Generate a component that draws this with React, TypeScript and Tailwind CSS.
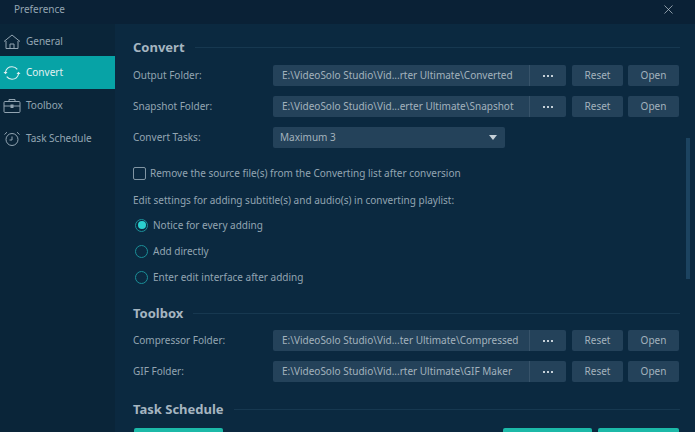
import { ReactNode } from "react";
import { X } from "lucide-react";

const font = { fontFamily: '"Noto Sans", sans-serif' };

function HomeIcon() {
  return (
    <svg width="18" height="16" viewBox="0 0 18 16" fill="none" stroke="currentColor" strokeWidth="1">
      <path d="M1 7.5 9 1l8 6.5" />
      <path d="M3 7v7.5h12V7" />
      <path d="M7 14.5V10h4v4.5" />
    </svg>
  );
}

function SyncIcon() {
  return (
    <svg width="18" height="16" viewBox="0 0 18 16" fill="none" stroke="currentColor" strokeWidth="1.1">
      <path d="M2.5 7C3.2 3.8 5.8 1.8 9 1.8c2.2 0 4 .9 5.3 2.6" />
      <path d="M15.5 9c-.7 3.2-3.3 5.2-6.5 5.2-2.2 0-4-.9-5.3-2.6" />
      <path d="M0.5 7h4L2.5 9.2z" fill="currentColor" stroke="none" />
      <path d="M13.5 9h4l-2-2.2z" fill="currentColor" stroke="none" />
    </svg>
  );
}

function ToolboxIcon() {
  return (
    <svg width="18" height="16" viewBox="0 0 18 16" fill="none" stroke="currentColor" strokeWidth="1">
      <rect x="1" y="3.5" width="16" height="11" rx="1" />
      <path d="M6 3.5V1.5h6v2" />
      <path d="M1 8h16" />
      <rect x="8" y="7" width="2" height="2.5" fill="currentColor" />
    </svg>
  );
}

function ClockIcon() {
  return (
    <svg width="18" height="16" viewBox="0 0 18 16" fill="none" stroke="currentColor" strokeWidth="1">
      <circle cx="9" cy="8.5" r="6" />
      <path d="M9 5.5v3.5H6.5" />
      <path d="M1.5 3.5 4 1.2M16.5 3.5 14 1.2" />
    </svg>
  );
}

function NavItem({ icon, label, active }: { icon: ReactNode; label: string; active?: boolean }) {
  return (
    <div
      className={
        active
          ? "flex h-[33px] items-center gap-[5px] bg-[#07a3a6] pl-[3px] text-[#e3f1f2]"
          : "flex h-[33px] items-center gap-[5px] pl-[3px] text-[#93a5b2]"
      }
    >
      {icon}
      <span className="text-[10px]">{label}</span>
    </div>
  );
}

function SectionTitle({ children }: { children: string }) {
  return (
    <div className="flex h-[20px] items-center gap-[10px] pr-[15px]">
      <span className="text-[13px] leading-none font-bold text-[#a5b5c0]">{children}</span>
      <div className="h-px flex-1 bg-[#173850]" />
    </div>
  );
}

function FolderRow({ label, path }: { label: string; path: string }) {
  return (
    <div className="flex h-[21px] items-center text-[10px] text-[#93a5b2]">
      <span className="w-[140px] shrink-0">{label}</span>
      <div className="flex h-full w-[293px] items-center rounded-[2px] bg-[#24425a]">
        <span className="flex-1 truncate pl-[9px] text-[#a3b2bd]">{path}</span>
        <span className="flex h-full w-[37px] shrink-0 items-center justify-center gap-[2px] border-l border-[#37536a]">
          <i className="size-[2px] bg-[#c5d0d8]" />
          <i className="size-[2px] bg-[#c5d0d8]" />
          <i className="size-[2px] bg-[#c5d0d8]" />
        </span>
      </div>
      <div className="ml-[6px] flex h-full w-[51px] items-center justify-center rounded-[2px] bg-[#24425a] text-[#a3b2bd]">Reset</div>
      <div className="ml-[5px] flex h-full w-[51px] items-center justify-center rounded-[2px] bg-[#24425a] text-[#a3b2bd]">Open</div>
    </div>
  );
}

function Radio({ label, checked }: { label: string; checked?: boolean }) {
  return (
    <div className="flex h-[26px] items-center pl-[2px] text-[10px] text-[#93a5b2]">
      <span className="flex size-[13px] items-center justify-center rounded-full border border-[#1b8f98]">
        {checked && <span className="size-[8px] rounded-full bg-[#2bd0cf]" />}
      </span>
      <span className="ml-[5px]">{label}</span>
    </div>
  );
}

export default function App() {
  return (
    <div className="relative flex h-[432px] w-[695px] flex-col overflow-hidden bg-[#0b2940]" style={font}>
      <header className="flex h-[24px] shrink-0 items-center justify-between bg-[#0a2136] pb-[6px] pl-[14px] pr-[19px]">
        <span className="text-[10px] text-[#93a5b2]">Preference</span>
        <X size={15} strokeWidth={1.2} className="text-[#b3c0ca]" />
      </header>
      <div className="flex min-h-0 flex-1">
        <nav className="w-[115px] shrink-0 bg-[#0a2539]">
          <div className="h-[32px] pt-px">
            <NavItem icon={<HomeIcon />} label="General" />
          </div>
          <NavItem icon={<SyncIcon />} label="Convert" active />
          <NavItem icon={<ToolboxIcon />} label="Toolbox" />
          <NavItem icon={<ClockIcon />} label="Task Schedule" />
        </nav>
        <main className="min-w-0 flex-1 pl-[18px] pt-[13px]">
          <SectionTitle>Convert</SectionTitle>
          <div className="mt-[8px] flex flex-col gap-[10px]">
            <FolderRow label="Output Folder:" path="E:\VideoSolo Studio\Vid...rter Ultimate\Converted" />
            <FolderRow label="Snapshot Folder:" path="E:\VideoSolo Studio\Vid...erter Ultimate\Snapshot" />
            <div className="flex h-[21px] items-center text-[10px] text-[#93a5b2]">
              <span className="w-[140px] shrink-0">Convert Tasks:</span>
              <div className="flex h-full w-[232px] items-center justify-between rounded-[2px] bg-[#24425a] pl-[7px] pr-[8px] text-[#a3b2bd]">
                <span>Maximum 3</span>
                <span className="h-0 w-0 border-x-[4px] border-t-[5px] border-x-transparent border-t-[#c5d0d8]" />
              </div>
            </div>
          </div>
          <div className="mt-[18px] flex h-[14px] items-center text-[10px] text-[#93a5b2]">
            <span className="size-[13px] rounded-[2px] border border-[#8195a3]" />
            <span className="ml-[4px]">Remove the source file(s) from the Converting list after conversion</span>
          </div>
          <div className="mt-[13px] h-[14px] text-[10px] leading-[14px] text-[#93a5b2]">
            Edit settings for adding subtitle(s) and audio(s) in converting playlist:
          </div>
          <div className="mt-[5px]">
            <Radio label="Notice for every adding" checked />
            <Radio label="Add directly" />
            <Radio label="Enter edit interface after adding" />
          </div>
          <div className="mt-[13px]">
            <SectionTitle>Toolbox</SectionTitle>
          </div>
          <div className="mt-[7px] flex flex-col gap-[10px]">
            <FolderRow label="Compressor Folder:" path="E:\VideoSolo Studio\Vid...ter Ultimate\Compressed" />
            <FolderRow label="GIF Folder:" path="E:\VideoSolo Studio\Vid...rter Ultimate\GIF Maker" />
          </div>
          <div className="mt-[17px]">
            <SectionTitle>Task Schedule</SectionTitle>
          </div>
          <div className="mt-[9px] flex h-[21px] pl-px pr-[16px]">
            <div className="w-[89px] rounded-[2px] bg-[#1cb9a8]" />
            <div className="ml-auto w-[89px] rounded-[2px] bg-[#1cb9a8]" />
            <div className="ml-[6px] w-[81px] rounded-[2px] bg-[#1cb9a8]" />
          </div>
        </main>
      </div>
      <div className="absolute right-[5px] top-[138px] h-[141px] w-[4px] bg-[#1c4360]" />
    </div>
  );
}
